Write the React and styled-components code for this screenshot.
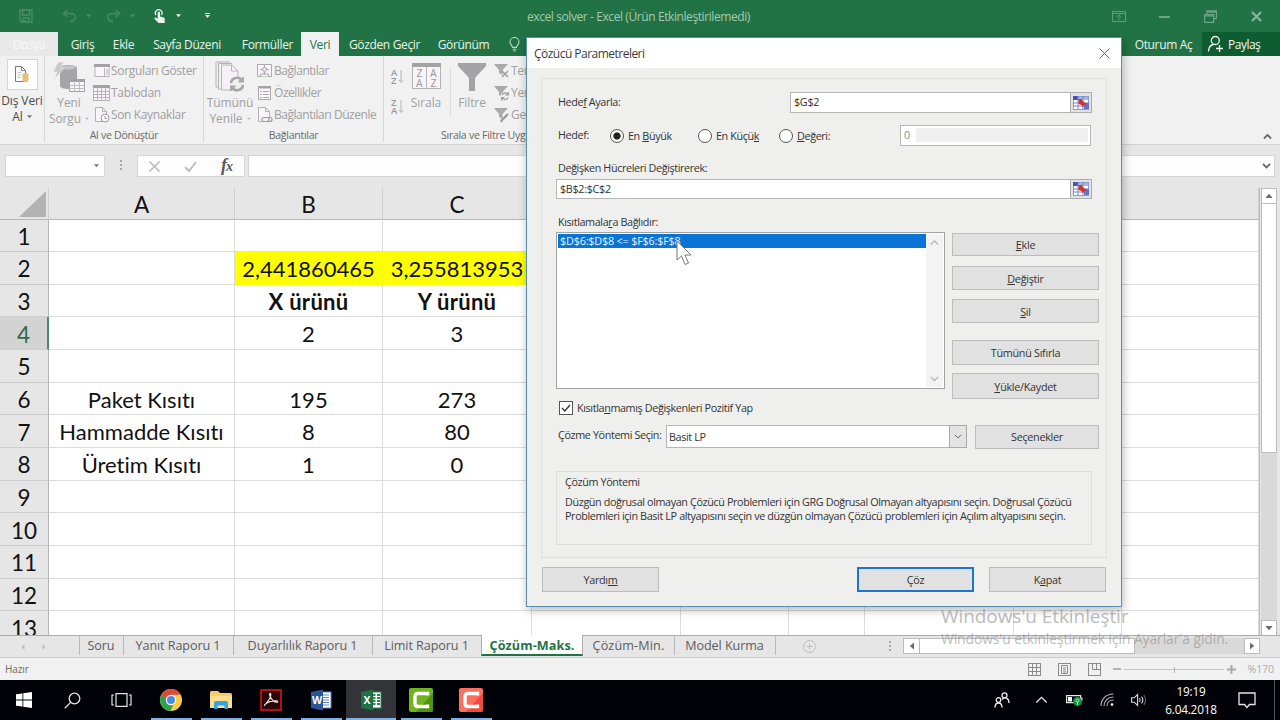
import React from 'react';
import styled, { createGlobalStyle, css } from 'styled-components';

const ui = "'Open Sans', 'Noto Sans', sans-serif";
const cellFont = "Lato, 'Open Sans', sans-serif";
const green = '#217346';

const GlobalStyle = createGlobalStyle`
  * { box-sizing: border-box; }
  body { margin: 0; overflow: hidden; font-family: ${ui}; }
  svg { display: block; flex: none; overflow: visible; }
  u { text-decoration-thickness: 1px; text-underline-offset: 1px; }
`;

const Screen = styled.div`
  position: relative;
  width: 1280px;
  height: 720px;
  overflow: hidden;
  display: flex;
  flex-direction: column;
  background: #e6e6e6;
  white-space: nowrap;
`;

/* title bar */
const TitleBar = styled.div`
  height: 32px;
  flex: none;
  background: ${green};
  display: flex;
  align-items: center;
`;
const QuickAccess = styled.div`
  width: 527px;
  padding-left: 19px;
  display: flex;
  align-items: center;
`;
const Gap = styled.span`
  flex: none;
  width: ${({ $w }) => $w}px;
`;
const WindowTitle = styled.div`
  width: 585px;
  color: #a3cbb2;
  font-size: 12px;
  letter-spacing: -0.41px;
`;

/* ribbon tabs */
const TabRow = styled.div`
  height: 24px;
  flex: none;
  background: ${green};
  display: flex;
`;
const Tab = styled.div`
  width: ${({ $w }) => $w}px;
  height: 24px;
  display: flex;
  align-items: center;
  justify-content: center;
  flex: none;
  font-size: 12px;
  letter-spacing: -0.35px;
  color: #e9f3ec;
  ${({ $file }) => $file && css`
    background: #e9e9e9;
    color: #f9f9f9;
  `}
  ${({ $active }) => $active && css`
    background: #f1f1f1;
    color: ${green};
  `}
`;
const TabSpacer = styled.div`
  flex: 1;
`;
const ShareButton = styled.div`
  width: 78px;
  padding-left: 5px;
  display: flex;
  align-items: center;
  gap: 4px;
  background: #0f5c30;
  color: #f2f8f4;
  font-size: 12px;
  letter-spacing: -0.5px;
`;

/* ribbon */
const Ribbon = styled.div`
  height: 89px;
  flex: none;
  display: flex;
  background: #f1f1f1;
  border-bottom: 1px solid #d2d2d2;
  color: #a09fa1;
  font-size: 12px;
`;
const Group = styled.div`
  width: ${({ $w }) => $w}px;
  height: 86px;
  flex: none;
  display: flex;
  flex-direction: column;
  border-right: 1px solid #d8d8d8;
`;
const GroupBody = styled.div`
  display: flex;
  height: 73px;
`;
const GroupName = styled.div`
  height: 14px;
  line-height: 14px;
  padding-left: ${({ $left = 0 }) => $left}px;
  text-align: ${({ $left }) => ($left ? 'left' : 'center')};
  font-size: 10.6px;
  letter-spacing: -0.3px;
  color: #6a6a6a;
`;
const BigButton = styled.div`
  width: ${({ $w }) => $w}px;
  flex: none;
  display: flex;
  flex-direction: column;
  align-items: center;
  padding-top: ${({ $top = 0 }) => $top}px;
  line-height: 16px;
  letter-spacing: -0.1px;
  color: ${({ $dark }) => ($dark ? '#4a4a4a' : '#a09fa1')};
  div { display: flex; align-items: center; gap: 4px; line-height: 15px; }
`;
const BigIcon = styled.span`
  height: ${({ $h }) => $h}px;
  flex: none;
`;
const IconFrame = styled.span`
  width: 31px;
  height: 31px;
  margin: 3px 0 3px;
  display: flex;
  align-items: center;
  justify-content: center;
  background: #fdfdfd;
  border: 1px solid #d4d4d4;
`;
const SmallList = styled.div`
  display: flex;
  flex-direction: column;
  padding-top: 4px;
`;
const SmallButton = styled.div`
  height: 22px;
  display: flex;
  align-items: center;
  padding-bottom: 1px;
  letter-spacing: ${({ $ls = -0.3 }) => $ls}px;
`;
const SmallIcon = styled.span`
  width: 18px;
  flex: none;
  display: flex;
  justify-content: center;
  padding-right: 1px;
`;
const SortColumn = styled.div`
  width: 26px;
  padding: 12px 0 0 7px;
  display: flex;
  flex-direction: column;
  gap: 12px;
`;
const Divider = styled.span`
  width: 1px;
  height: 49px;
  margin: 12px 3px 0 8px;
  background: #dcdcdc;
`;
const RibbonEnd = styled.div`
  flex: 1;
  display: flex;
  justify-content: flex-end;
  align-items: flex-end;
  padding: 0 8px 5px 0;
`;

/* formula bar */
const FormulaBar = styled.div`
  height: 43px;
  flex: none;
  display: flex;
  padding: 10px 4px 0 5px;
`;
const Field = styled.div`
  width: ${({ $w }) => $w}px;
  height: 22px;
  display: flex;
  align-items: center;
  justify-content: ${({ $between }) => ($between ? 'space-between' : 'flex-end')};
  padding: ${({ $pad = '0 5px' }) => $pad};
  background: #fdfdfd;
  border: 1px solid #d6d6d6;
`;
const Dots = styled.div`
  width: ${({ $w }) => $w}px;
  display: flex;
  justify-content: center;
  padding-top: ${({ $top }) => $top}px;
`;
const Fx = styled.span`
  font: italic bold 18px/18px 'Liberation Serif', serif;
  letter-spacing: -1px;
  color: #5a5a5a;
  small { font-size: 14px; }
`;

/* grid */
const SheetArea = styled.div`
  height: 447px;
  flex: none;
  display: flex;
`;
const Grid = styled.div`
  width: 1260px;
  height: 447px;
  overflow: hidden;
  font-family: ${cellFont};
  font-size: 22px;
  font-variant-ligatures: none;
  color: #111;
  border-right: 1px solid #bdbdbd;
`;
const Row = styled.div`
  display: grid;
  grid-template-columns: 49px 186px 148px 149px 149px 108px 76px 149px 108px 1fr;
  height: ${({ $head }) => ($head ? '31.5px' : '32.66px')};
`;
const HeadCell = styled.div`
  display: flex;
  align-items: center;
  justify-content: center;
  padding-top: 2px;
  background: #e6e6e6;
  border-right: 1px solid #cfcfcf;
  border-bottom: 1px solid #b8b8b8;
  font-size: 22.5px;
`;
const Corner = styled(HeadCell)`
  justify-content: flex-end;
  padding-right: 2px;
`;
const RowNumber = styled(HeadCell)`
  border-right: 1px solid #b4b4b4;
  border-bottom: 1px solid #cdcdcd;
  ${({ $active }) => $active && css`
    background: #d3d3d3;
    color: #2f6a4d;
    border-right: 2px solid #4b8a69;
  `}
`;
const Cell = styled.div`
  display: flex;
  align-items: center;
  justify-content: center;
  padding-top: 1.4px;
  background: #fff;
  border-right: 1px solid #dcdcdc;
  border-bottom: 1px solid #dcdcdc;
  font-weight: ${({ $bold }) => ($bold ? 700 : 400)};
  letter-spacing: ${({ $bold }) => ($bold ? 0.3 : 0)}px;
  ${({ $yellow }) => $yellow && css`
    background: #ffff00;
    border-color: #ffff00;
  `}
`;
const VScroll = styled.div`
  width: 16px;
  height: 448px;
  margin: 0 0 0 1px;
  display: flex;
  flex-direction: column;
  background: #d9d9d9;
`;
const ScrollButton = styled.div`
  width: ${({ $w = 16 }) => $w}px;
  height: 16px;
  flex: none;
  display: flex;
  align-items: center;
  justify-content: center;
  background: #fff;
  border: 1px solid #bcbcbc;
`;
const VThumb = styled.div`
  height: 250px;
  margin-top: -1px;
  background: #fff;
  border: 1px solid #bcbcbc;
`;
const Fill = styled.div`
  flex: 1;
`;

/* sheet tabs */
const SheetBar = styled.div`
  height: 23px;
  flex: none;
  display: flex;
  border-top: 1px solid #ababab;
  border-bottom: 1px solid #cbcbcb;
  color: #5d5d5d;
`;
const SheetNav = styled.div`
  width: 79px;
  display: flex;
  align-items: center;
  padding-left: 20px;
  gap: 15px;
`;
const SheetTab = styled.div`
  width: ${({ $w }) => $w}px;
  height: ${({ $active }) => ($active ? 21 : 19)}px;
  margin-top: ${({ $active }) => ($active ? '-1px' : 0)};
  padding-top: ${({ $active }) => ($active ? '2px' : 0)};
  flex: none;
  display: flex;
  justify-content: center;
  align-items: center;
  font-size: 12.6px;
  letter-spacing: ${({ $ls = -0.08 }) => $ls}px;
  box-shadow: ${({ $active, $first }) => ($active || $first ? 'none' : 'inset 1px 0 #b9b9b9')};
  ${({ $active }) => $active && css`
    background: #fff;
    color: ${green};
    font-weight: 700;
    border: 1px solid #ababab;
    border-top: 0;
    border-bottom: 2px solid ${green};
  `}
`;
const HScroll = styled.div`
  width: 357px;
  height: 16px;
  margin-top: 2px;
  display: flex;
  background: #d9d9d9;
`;
const HThumb = styled.div`
  width: 216px;
  height: 16px;
  margin-left: -1px;
  background: #fff;
  border: 1px solid #bcbcbc;
`;

/* status bar */
const StatusBar = styled.div`
  height: 22px;
  flex: none;
  display: flex;
  align-items: center;
  background: #f1f1f1;
  padding-left: 5px;
  font-size: 10px;
  letter-spacing: -0.1px;
  color: #6a6a6a;
`;
const Zoom = styled.span`
  color: #ababab;
  font-size: 10.6px;
`;
const ZoomLine = styled.span`
  width: 100px;
  height: 1px;
  margin: 0 3px;
  background: #c4c4c4;
  display: flex;
  justify-content: center;
  &::after {
    content: '';
    width: 1px;
    height: 6px;
    margin-top: -2px;
    background: #b4b4b4;
  }
`;

/* taskbar */
const TaskBar = styled.div`
  height: 40px;
  flex: none;
  display: flex;
  background: #010208;
  color: #fff;
`;
const TaskButton = styled.div`
  width: ${({ $w = 50 }) => $w}px;
  height: 40px;
  flex: none;
  display: flex;
  flex-direction: column;
  align-items: center;
  justify-content: space-between;
  background: ${({ $active }) => ($active ? '#333438' : 'transparent')};
`;
const TaskIcon = styled.div`
  height: 38px;
  padding-top: 2px;
  display: flex;
  align-items: center;
`;
const Running = styled.div`
  width: ${({ $full }) => ($full ? 50 : 41)}px;
  height: 2px;
  background: #7fb0e6;
`;
const Tray = styled.div`
  flex: 1;
  display: flex;
  justify-content: flex-end;
  align-items: center;
`;
const Clock = styled.div`
  width: 60px;
  margin: 0 17px 0 14px;
  text-align: center;
  font-size: 11.8px;
  line-height: 18.5px;
  letter-spacing: -0.2px;
`;
const DesktopEdge = styled.div`
  width: 6px;
  height: 40px;
  margin-left: 18px;
  border-left: 1px solid #55565a;
`;

/* solver dialog */
const Dialog = styled.div`
  position: absolute;
  left: 526px;
  top: 37px;
  width: 596px;
  height: 570px;
  background: #efefee;
  border: 1px solid #5790b5;
  box-shadow: 1px 3px 9px rgba(0, 0, 0, 0.28);
  color: #333;
  font-size: 10.8px;
  letter-spacing: -0.38px;
`;
const DialogTitle = styled.div`
  height: 30px;
  background: #fff;
  display: flex;
  justify-content: space-between;
  align-items: center;
  padding: 0 11px 0 7px;
  font-size: 12px;
  letter-spacing: -0.52px;
  color: #3c3c3c;
`;
const Panel = styled.div`
  margin: 10px 15px 0 14px;
  width: 566px;
  height: 480px;
  padding: 13px 0 0 14px;
  border: 1px solid #dfdfdf;
`;
const Line = styled.div`
  display: flex;
  align-items: ${({ $align = 'center' }) => $align};
  height: ${({ $h }) => $h}px;
  margin-bottom: ${({ $mb = 0 }) => $mb}px;
`;
const Label = styled.div`
  width: ${({ $w }) => ($w ? `${$w}px` : 'auto')};
  height: 16px;
  line-height: 16px;
  margin-bottom: ${({ $up = 1 }) => $up * 2}px;
  padding-left: 2px;
  flex: none;
`;
const Input = styled.div`
  width: ${({ $w }) => $w}px;
  height: ${({ $h = 20 }) => $h}px;
  flex: none;
  display: flex;
  align-items: center;
  padding: 0 0 2px 3px;
  letter-spacing: -0.32px;
  background: #fff;
  border: 1px solid #b6b6b6;
`;
const DisabledInput = styled(Input)`
  height: 21px;
  padding: 0 2px 2px 3px;
  color: #8d8d8d;
  &::after {
    content: '';
    flex: 1;
    height: 14px;
    margin-left: 6px;
    background: #f0f0f0;
  }
`;
const RefButton = styled.div`
  width: 22px;
  height: ${({ $h = 21 }) => $h}px;
  margin-left: -1px;
  display: flex;
  align-items: center;
  justify-content: center;
  background: #e2e2e4;
  border: 1px solid #adadad;
`;
const Radio = styled.div`
  width: ${({ $w }) => $w}px;
  height: 16px;
  display: flex;
  align-items: center;
  gap: 4px;
`;
const RadioDot = styled.span`
  width: 14px;
  height: 14px;
  border: 1px solid #555;
  border-radius: 50%;
  background: ${({ $on }) => ($on ? 'radial-gradient(#222 3.2px, #fff 4px)' : '#fff')};
`;
const ConstraintList = styled.div`
  width: 389px;
  height: 157px;
  display: flex;
  justify-content: space-between;
  background: #fff;
  border: 1px solid #a3a3a3;
  padding: 1px;
`;
const Constraint = styled.div`
  width: 369px;
  height: 14px;
  line-height: 13px;
  padding-left: 2px;
  background: #0a74d6;
  color: #e8f3fd;
  letter-spacing: -0.18px;
`;
const ListScroll = styled.div`
  width: 17px;
  display: flex;
  flex-direction: column;
  justify-content: space-between;
  align-items: center;
  padding: 6px 0;
  background: #f3f3f3;
`;
const ButtonColumn = styled.div`
  margin-left: 7px;
  padding-top: 1px;
  display: flex;
  flex-direction: column;
`;
const Button = styled.div`
  width: ${({ $w = 147 }) => $w}px;
  height: ${({ $h = 24 }) => $h}px;
  margin-bottom: ${({ $mb = 0 }) => $mb}px;
  flex: none;
  display: flex;
  align-items: center;
  justify-content: center;
  letter-spacing: -0.28px;
  background: #e1e1e1;
  border: ${({ $primary }) => ($primary ? '2px solid #1f74d0' : '1px solid #bcbcbc')};
`;
const OptionsButton = styled(Button)`
  margin: 1px 0 0 8px;
  padding-bottom: 1px;
`;
const CheckBox = styled.span`
  width: 14px;
  height: 14px;
  margin: 0 4px 0 3px;
  display: flex;
  align-items: center;
  justify-content: center;
  background: #fff;
  border: 1px solid #555;
`;
const Select = styled.div`
  width: 301px;
  height: 23px;
  display: flex;
  align-items: center;
  justify-content: space-between;
  padding-left: 2px;
  background: #fff;
  border: 1px solid #b6b6b6;
`;
const SelectArrow = styled.span`
  width: 18px;
  height: 23px;
  margin-right: -1px;
  display: flex;
  align-items: center;
  justify-content: center;
  background: #e3e3e3;
  border: 1px solid #a9a9a9;
`;
const MethodBox = styled.div`
  width: 536px;
  height: 74px;
  padding: 3px 0 0 8px;
  border: 1px solid #dfdfdf;
  p { margin: 0; line-height: 14px; }
  p:first-child { margin-bottom: 6px; }
`;
const Footer = styled.div`
  display: flex;
  padding: 9px 15px 0 15px;
`;

const Watermark = styled.div`
  position: absolute;
  left: 941px;
  top: 603px;
  color: rgba(140, 140, 140, 0.6);
  font-size: 13.8px;
  line-height: 20px;
  letter-spacing: -0.05px;
  div:first-child {
    font-size: 19px;
    line-height: 26px;
    letter-spacing: -0.08px;
  }
`;
const Pointer = styled.div`
  position: absolute;
  left: 676px;
  top: 240px;
`;

const Caret = ({ color = '#777', s = 5 }) => (
  <svg width={s} height="4" viewBox="0 0 6 4"><path d="M0 0h6L3 3.6z" fill={color} /></svg>
);
const Arrow = ({ turn = 0, color = '#6b6b6b', size = 8 }) => (
  <svg width={size} height={size} viewBox="0 0 8 8">
    <path d="M4 1.8 7.6 6H.4z" fill={color} transform={`rotate(${turn} 4 4)`} />
  </svg>
);
const Chevron = ({ up, color = '#666', w = 10, sw = 1.5 }) => (
  <svg width={w} height={w * 0.6} viewBox="0 0 10 6" fill="none" stroke={color} strokeWidth={sw}>
    <path d={up ? 'M1 5 5 1l4 4' : 'M1 1l4 4 4-4'} />
  </svg>
);
const VDots = () => (
  <svg width="3" height="12" fill="#a8a8a8">
    <rect width="2" height="2" /><rect y="4" width="2" height="2" /><rect y="8" width="2" height="2" />
  </svg>
);
const SaveIcon = () => (
  <svg width="14" height="14" viewBox="0 0 14 14" fill="none" stroke="#4c8f69" strokeWidth="1.3">
    <path d="M1 1h12v12H2.4L1 11.6zM3.5 1v5h7V1M4 13V9h6v4M6 11v2" />
  </svg>
);
const UndoIcon = ({ flip }) => (
  <svg width="15" height="14" viewBox="0 0 15 14" fill="none" stroke="#418760" strokeWidth="1.8">
    <path d="M5.5 1 1.5 4.6l4 3.6M2 4.6h7.2c5.6 0 5.2 7.4-1.2 7.8" transform={flip ? 'translate(15) scale(-1 1)' : undefined} />
  </svg>
);
const TouchIcon = () => (
  <svg width="11" height="15" viewBox="0 0 11 15">
    <path d="M2 6.2A3.4 3.4 0 1 1 7.6 6" fill="none" stroke="#e8f4ec" strokeWidth="1.2" />
    <path d="M3.7 3.8c0-1.500 2.400-1.500 2.400 0v3.700l3.600.9c.8.2 1 .7 1 1.300V14H4.600L.6 10c-.7-1.100.6-1.900 1.500-1.200l1.600 1.200z" fill="#e8f4ec" />
  </svg>
);
const BulbIcon = () => (
  <svg width="11" height="15" viewBox="0 0 11 15" fill="none" stroke="#b9d8c6" strokeWidth="1.1">
    <path d="M3.5 10.4C3.5 8.3 1 7.8 1 5a4.5 4.5 0 0 1 9 0c0 2.800-2.500 3.300-2.500 5.400zM3.700 12.200h3.600M4.300 14h2.400" />
  </svg>
);
const PersonAddIcon = () => (
  <svg width="17" height="18" viewBox="0 0 17 18" fill="none" stroke="#eef6f1" strokeWidth="1.3">
    <circle cx="8.300" cy="5.500" r="4" />
    <path d="M1.500 16.500c.2-4.200 2.200-6.500 5-7M9 13.500h7M12.500 10v7" />
  </svg>
);
const Funnel = ({ w = 28, h = 28 }) => (
  <svg width={w} height={h} viewBox="0 0 28 28" fill="#a3a2a4">
    <path d="M0 0h28v3L17 15v13h-6V15L0 3z" />
  </svg>
);
const SmallFunnel = ({ kind }) => (
  <svg width="16" height="16" viewBox="0 0 16 16">
    <path d="M0 1h14L8.500 7v5L5 10V7z" fill="#aaa9ab" />
    <g fill="none" stroke="#9b9a9c" strokeWidth="1.500">
      {kind === 'clear' && <path d="M8 8l6 6M14 8l-6 6" />}
      {kind === 'again' && (
        <>
          <circle cx="11" cy="11.500" r="4.500" fill="#f1f1f1" stroke="none" />
          <path d="M14 10a3.200 3.200 0 0 0-6 0M8 12.500a3.200 3.200 0 0 0 6 0M14.300 7v3h-3M7.700 15.500v-3h3" strokeWidth="1.200" />
        </>
      )}
      {kind === 'adv' && <path d="M14 7l-6 6-1 2" strokeWidth="2.200" />}
    </g>
  </svg>
);
const SortIcon = ({ a, b }) => (
  <svg width="14" height="18" viewBox="0 0 14 18" fill="#98979a" fontFamily="Open Sans" fontSize="9.500" fontWeight="600">
    <text x="0" y="7.500">{a}</text>
    <text x="0" y="16">{b}</text>
    <path d="M10 2v12M8 12l2 2.500 2-2.500" fill="none" stroke="#b5b4b6" />
  </svg>
);
const SortBigIcon = () => (
  <svg width="29" height="26" viewBox="0 0 29 26" fontFamily="Open Sans" fontSize="10.500">
    <rect x=".5" y=".5" width="28" height="25" fill="#f8f4f8" stroke="#b4b2b5" />
    <path d="M0 0h29v4H0z" fill="#a3a2a4" />
    <path d="M14.500 4v21" stroke="#b4b2b5" />
    <g fill="#98979a">
      <text x="4.500" y="14">Z</text><text x="4" y="23.500">A</text>
      <text x="18" y="14">A</text><text x="18.500" y="23.500">Z</text>
    </g>
  </svg>
);
const DataFileIcon = () => (
  <svg width="16" height="17" viewBox="0 0 16 17">
    <path d="M1.500.5h6l4 4v11h-10z" fill="#fff" stroke="#777" />
    <path d="M7.500.5v4h4" fill="none" stroke="#8a8a8a" />
    <path d="M3.500 6.500h4M3.500 9h4M3.500 11.500h3" fill="none" stroke="#c4c4c4" />
    <path d="M8.500 8.500c0-2 6-2 6 0v6c0 2-6 2-6 0z" fill="#e5c077" />
  </svg>
);
const QueryIcon = () => (
  <svg width="32" height="33" viewBox="0 0 32 33">
    <path d="M7 7c0-4 17-4 17 0v18c0 4-17 4-17 0z" fill="#a5a4a6" />
    <ellipse cx="15.500" cy="6.500" rx="7" ry="2" fill="#c6c5c7" />
    <path d="M5 1h6L7.500 7H11L1 19l3-8H0z" fill="#c9c8ca" stroke="#f1f1f1" strokeWidth=".6" />
    <path d="M16.500 18.500h15v12h-15z" fill="#faf6fa" stroke="#a09fa1" />
    <path d="M16 18h16v3H16z" fill="#a09fa1" />
    <path d="M16 24.500h16M16 27.500h16M21.500 20v10M26.500 20v10" stroke="#c0bdc1" />
  </svg>
);
const RefreshIcon = () => (
  <svg width="30" height="32" viewBox="0 0 30 32">
    <path d="M4 26H1V1h14" fill="none" stroke="#b4b2b5" />
    <path d="M6.500 28H3.500V2.500H17" fill="none" stroke="#b4b2b5" />
    <path d="M6.500 4h10l6.500 6v19H6.500z" fill="#f8f0f8" stroke="#b9b6ba" />
    <path d="M16.500 4v6H23" fill="none" stroke="#b9b6ba" />
    <circle cx="22" cy="23" r="8" fill="#f1f1f1" />
    <g fill="none" stroke="#a5a4a6" strokeWidth="2.600">
      <path d="M16 22a6 6 0 0 1 11-2.500M28 24a6 6 0 0 1-11 2.500" />
      <path d="M28 16v4.500h-4.500M16 30v-4.500h4.500" strokeWidth="1.800" />
    </g>
  </svg>
);
const TableIcon = () => (
  <svg width="17" height="16" viewBox="0 0 17 16" fill="none" stroke="#b7b3b8">
    <rect x=".5" y=".5" width="16" height="15" fill="#faf3fa" />
    <path d="M0 1.500h17" stroke="#a3a2a4" strokeWidth="3" />
    <path d="M0 6.500h17M0 9.500h17M0 12.500h17M4.500 3v13M8.500 3v13M12.500 3v13" />
  </svg>
);
const PaneIcon = () => (
  <svg width="16" height="14" viewBox="0 0 16 14" fill="none" stroke="#b7b3b8">
    <rect x="1" y=".5" width="14" height="12" fill="#faf6fa" />
    <path d="M0 1.500h16" stroke="#a3a2a4" strokeWidth="3" />
    <path d="M10.500 4v9M12 6h2M12 8h2M12 10h2" />
  </svg>
);
const RecentIcon = ({ link }) => (
  <svg width="16" height="16" viewBox="0 0 16 16" fill="none" stroke="#b3b0b4">
    <path d="M1.500.5h7l4 4v10h-11z" fill="#faf3fa" />
    <path d="M8.500.5v4h4" />
    {link
      ? <path d="M7 10.500h3a1.500 1.500 0 0 1 0 4H7a1.500 1.500 0 0 1 0-4zM10 10.500h3a1.500 1.500 0 0 1 0 4h-3" fill="#f1f1f1" stroke="#9c9b9d" strokeWidth="1.200" />
      : <><circle cx="11" cy="11" r="4" fill="#f8f8f8" stroke="#9c9b9d" /><path d="M11 9v2.500h2" stroke="#9c9b9d" /></>}
  </svg>
);
const LinksIcon = () => (
  <svg width="15" height="14" viewBox="0 0 15 14" fill="none" stroke="#aaa8ab">
    <path d="M.5.5h14v12H.5z" fill="#faf3fa" />
    <path d="M3.500 12.500V10h8v2.500" fill="#f1f1f1" />
    <path d="M7.500 1.500 8.400 4.600 11.500 5.500 8.400 6.400 7.500 9.500 6.600 6.400 3.500 5.500 6.600 4.600z" stroke="#949395" strokeWidth=".8" />
  </svg>
);
const PropsIcon = () => (
  <svg width="13" height="14" viewBox="0 0 13 14" fill="none" stroke="#aaa8ab">
    <rect x=".5" y=".5" width="12" height="13" fill="#faf6fa" />
    <path d="M0 1.500h13" stroke="#a3a2a4" strokeWidth="2" />
    <path d="M2 5.500h2M5 5.500h6M2 8.500h2M5 8.500h6M2 11.500h2M5 11.500h6" />
  </svg>
);
const RefIcon = () => (
  <svg width="16" height="14" viewBox="0 0 16 14">
    <rect x=".5" y=".5" width="15" height="13" fill="#fff" stroke="#8b9bd0" />
    <path d="M0 0h5v4H0z" fill="#3f56b4" />
    <path d="M5 1h10v3H5z" fill="#a9b6e4" />
    <path d="M0 7h15M0 10h15M5 0v13M10 0v13" stroke="#7187cf" />
    <path d="M11 7h5v6h-5z" fill="#5f74c4" />
    <path d="M5.500 3H9l.5 2L13 7.500 9.500 11 8.500 9 5.500 8z" fill="#d5342c" />
  </svg>
);
const Letter = ({ fill, dark, l }) => (
  <svg width="22" height="22" viewBox="0 0 22 22">
    <rect x="11" y="3" width="10" height="16" fill="#fff" stroke={fill} />
    {l === 'W'
      ? <path d="M13 6h6M13 8.500h6M13 11h6M13 13.500h6M13 16h6" stroke={fill} />
      : <path d="M13 6h2.500M17 6h3M13 9h2.500M17 9h3M13 12h2.500M17 12h3M13 15h2.500M17 15h3" stroke={fill} strokeWidth="1.800" />}
    <path d="M1 3l12-2.500v21L1 19z" fill={dark} />
    <text x="7" y="15" fill="#fff" fontFamily="Open Sans" fontWeight="700" fontSize="10.500" textAnchor="middle">{l}</text>
  </svg>
);
const Camtasia = ({ a, b }) => (
  <svg width="24" height="24" viewBox="0 0 24 24">
    <rect width="24" height="24" rx="2" fill={a} />
    <path d="M24 5v17a2 2 0 0 1-2 2H7z" fill={b} />
    <path d="M18.500 7.500V5.500H9Q6 5.500 6 8.500v7q0 3 3 3h9.500v-2" fill="none" stroke="#fff" strokeWidth="3.400" />
  </svg>
);
const WindowsIcon = () => (
  <svg width="16" height="16" viewBox="0 0 16 16" fill="#fff">
    <path d="M0 2.300 6.500 1.400v6.200H0zM7.300 1.300 16 0v7.600H7.300zM0 8.400h6.500v6.200L0 13.700zM7.300 8.400H16V16l-8.700-1.300z" />
  </svg>
);
const SearchIcon = () => (
  <svg width="17" height="17" viewBox="0 0 17 17" fill="none" stroke="#e6e6e6" strokeWidth="1.300">
    <circle cx="10.500" cy="6.500" r="5.300" /><path d="M6.600 10.400.8 16.200" />
  </svg>
);
const TaskViewIcon = () => (
  <svg width="21" height="14" viewBox="0 0 21 14" fill="none" stroke="#e6e6e6" strokeWidth="1.200">
    <rect x="5" y=".6" width="11" height="12.800" /><path d="M3 2H1v10h2M18 2h2v10h-2" />
  </svg>
);
const ChromeIcon = () => (
  <svg width="22" height="22" viewBox="0 0 22 22">
    <circle cx="11" cy="11" r="11" fill="#fccd3f" />
    <path d="M1.500 5.500A11 11 0 0 0 10.300 22L14 14.500 11 11z" fill="#2fa353" />
    <path d="M1.500 5.500A11 11 0 0 1 20.600 5.800H11L7 12z" fill="#de4b3c" />
    <circle cx="11" cy="11" r="5.200" fill="#fff" />
    <circle cx="11" cy="11" r="4" fill="#4a8af0" />
  </svg>
);
const ExplorerIcon = () => (
  <svg width="22" height="18" viewBox="0 0 22 18">
    <path d="M0 1.500Q0 0 1.500 0H8l2 2h10.500Q22 2 22 3.500V17H0z" fill="#f3cf6b" />
    <path d="M0 5h22v12H0z" fill="#fbe08d" />
    <path d="M4 18v-6q0-2 2-2h10q2 0 2 2v6h-3.500v-3.500h-7V18z" fill="#36a3e0" />
  </svg>
);
const AcrobatIcon = () => (
  <svg width="22" height="22" viewBox="0 0 22 22">
    <rect x="1" y="1" width="20" height="20" fill="#2b0707" stroke="#d01a1a" strokeWidth="1.600" />
    <path d="M4.500 16.500c2-3.500 6.500-6 6.300-11.200 0-1.600-1.600-.8-1.200.7.800 3.400 4 7.300 7.200 7.500 1.500-.2 1-1.500-.5-1.600-4-.2-8 .8-11 3.200-1 .9-.9 1.500-.8 1.400z" fill="none" stroke="#efe6e6" strokeWidth="1.100" />
  </svg>
);
const PeopleIcon = () => (
  <svg width="16" height="16" viewBox="0 0 16 16" fill="none" stroke="#ececec" strokeWidth="1.300">
    <circle cx="10.500" cy="3.300" r="2.500" /><circle cx="4.500" cy="8" r="2.300" />
    <path d="M1 15.500c0-6 7-6 7 0M8 7.500c2.500-3.500 7-1.500 7 3.500" />
  </svg>
);
const BatteryIcon = () => (
  <svg width="17" height="14" viewBox="0 0 17 14">
    <path d="M.6 2.600h14v7H.6z" fill="none" stroke="#e8e8e8" strokeWidth="1.200" />
    <path d="M2 4h4v4.500H2z" fill="#fff" /><path d="M15 4.500h1.500v3H15z" fill="#e8e8e8" />
    <circle cx="11.500" cy="8.500" r="4.500" fill="#169243" />
    <path d="M10 7.500c0-2 3-2 3 0s-3 2-3 0M11.500 9v3" stroke="#bfe8cc" fill="none" />
  </svg>
);
const WifiIcon = () => (
  <svg width="15" height="14" viewBox="0 0 15 14" fill="none" stroke="#b9bbbd" strokeWidth="1.100">
    <path d="M1 13C1 6 6 1 13.500 1M4 13c0-5 4-9 9.500-9M7 13c0-3.500 2.500-6 6.500-6" />
    <circle cx="12" cy="11.500" r="1.300" fill="#fff" stroke="none" />
  </svg>
);
const VolumeIcon = () => (
  <svg width="16" height="14" viewBox="0 0 16 14" fill="none" stroke="#dcdcdc" strokeWidth="1.100">
    <path d="M.6 4.800h2.600L6.600 1.500v11L3.200 9.200H.6z" />
    <path d="M8.500 5q1.400 2 0 4M10.500 3.500q2.600 3.500 0 7" /><path d="M12.800 2q3.600 5 0 10" stroke="#66686c" />
  </svg>
);
const NoteIcon = () => (
  <svg width="18" height="17" viewBox="0 0 18 17" fill="none" stroke="#e8e8e8" strokeWidth="1.300">
    <path d="M1 1h16v11.500h-5.500L9 15.500l-2.500-3H1z" />
  </svg>
);
const RestoreIcon = () => (
  <svg width="13" height="13" viewBox="0 0 13 13" fill="none" stroke="#6ba585" strokeWidth="1.200">
    <path d="M.6 4.600h9v7.800h-9zM.6 6h9M3 4V.8h9.400v7.800H10M3 2.200h9.400" />
  </svg>
);
const RibbonModeIcon = () => (
  <svg width="14" height="11" viewBox="0 0 14 11" fill="none" stroke="#5f9d7b">
    <path d="M.5.5h13v10H.5zM.5 2.500h13M7 9V4M4.800 6 7 4l2.200 2" />
  </svg>
);
const ViewIcon = ({ kind }) => (
  <svg width="13" height="13" viewBox="0 0 13 13" fill="none" stroke="#8b8b8b">
    <rect x=".5" y=".5" width="12" height="12" />
    {kind === 'grid' && <path d="M.5 4.500h12M.5 8.500h12M4.500.5v12M8.500.5v12" />}
    {kind === 'page' && <path d="M3.500 2.500h6v8h-6zM5 5h3M5 7h3M5 9h3" />}
    {kind === 'break' && <path d="M4.500.5v6h8M8.500.5v6" />}
  </svg>
);

const SHEET_ROWS = [
  [],
  ['', '2,441860465', '3,255813953'],
  ['', 'X ürünü', 'Y ürünü'],
  ['', '2', '3'],
  [],
  ['Paket Kısıtı', '195', '273'],
  ['Hammadde Kısıtı', '8', '80'],
  ['Üretim Kısıtı', '1', '0'],
  [], [], [], [], [],
];
const COLUMNS = ['A', 'B', 'C', 'D', 'E', 'F', 'G', 'H', ''];

const SheetGrid = () => (
  <Grid>
    <Row $head>
      <Corner><svg width="27" height="26"><path d="M27 0v26H0z" fill="#b3b3b3" /></svg></Corner>
      {COLUMNS.map((c) => <HeadCell key={c}>{c}</HeadCell>)}
    </Row>
    {SHEET_ROWS.map((row, i) => (
      <Row key={i}>
        <RowNumber $active={i === 3}>{i + 1}</RowNumber>
        {COLUMNS.map((c, j) => (
          <Cell key={c} $bold={i === 2} $yellow={i === 1 && j > 0 && j < 3}>{row[j]}</Cell>
        ))}
      </Row>
    ))}
  </Grid>
);

const SolverDialog = () => (
  <Dialog>
    <DialogTitle>
      Çözücü Parametreleri
      <svg width="11" height="11" stroke="#666" fill="none"><path d="M.5.5l10 10M10.500.5l-10 10" /></svg>
    </DialogTitle>
    <Panel>
      <Line $h={21} $mb={12}>
        <Label $w={234}>Hede<u>f</u> Ayarla:</Label>
        <Input $w={281} $h={21}>$G$2</Input>
        <RefButton><RefIcon /></RefButton>
      </Line>
      <Line $h={21} $mb={14}>
        <Label $w={54}>Hedef:</Label>
        <Radio $w={88}><RadioDot $on /><span>En <u>B</u>üyük</span></Radio>
        <Radio $w={81}><RadioDot /><span>En Küçü<u>k</u></span></Radio>
        <Radio $w={121}><RadioDot /><span><u>D</u>eğeri:</span></Radio>
        <DisabledInput $w={191}>0</DisabledInput>
      </Line>
      <Line $h={18} $mb={1}><Label>Değişken Hücreleri Değiştirerek:</Label></Line>
      <Line $h={20} $mb={14}>
        <Input $w={515}>$B$2:$C$2</Input>
        <RefButton $h={20}><RefIcon /></RefButton>
      </Line>
      <Line $h={18} $mb={1}><Label $up={0.5}>Kısıtlamala<u>r</u>a Bağlıdır:</Label></Line>
      <Line $h={168} $align="flex-start">
        <ConstraintList>
          <Constraint>$D$6:$D$8 &lt;= $F$6:$F$8</Constraint>
          <ListScroll>
            <Chevron up color="#b5b5b5" w={9} />
            <Chevron color="#b5b5b5" w={9} />
          </ListScroll>
        </ConstraintList>
        <ButtonColumn>
          <Button $mb={10} $h={23}><span><u>E</u>kle</span></Button>
          <Button $mb={9}><span><u>D</u>eğiştir</span></Button>
          <Button $mb={17}><span><u>S</u>il</span></Button>
          <Button $mb={8} $h={25}>Tümünü Sıfırla</Button>
          <Button $h={26}><span><u>Y</u>ükle/Kaydet</span></Button>
        </ButtonColumn>
      </Line>
      <Line $h={15} $mb={10}>
        <CheckBox>
          <svg width="10" height="8" fill="none" stroke="#333" strokeWidth="1.300"><path d="M1 4l2.800 3L9 1" /></svg>
        </CheckBox>
        <span>Kısıtla<u>n</u>mamış Değişkenleri Pozitif Yap</span>
      </Line>
      <Line $h={23} $mb={23}>
        <Label $w={110} $up={1.5}>Çözme Yöntemi Seçin:</Label>
        <Select>Basit LP<SelectArrow><Chevron color="#666" w={8} sw={1.200} /></SelectArrow></Select>
        <OptionsButton $w={124}>Seçenekler</OptionsButton>
      </Line>
      <MethodBox>
        <p>Çözüm Yöntemi</p>
        <p>Düzgün doğrusal olmayan Çözücü Problemleri için GRG Doğrusal Olmayan altyapısını seçin. Doğrusal Çözücü</p>
        <p>Problemleri için Basit LP altyapısını seçin ve düzgün olmayan Çözücü problemleri için Açılım altyapısını seçin.</p>
      </MethodBox>
    </Panel>
    <Footer>
      <Button $w={117} $h={25}><span>Yardı<u>m</u></span></Button>
      <Gap $w={198} />
      <Button $w={117} $h={25} $primary>Çöz</Button>
      <Gap $w={15} />
      <Button $w={117} $h={25}><span>K<u>a</u>pat</span></Button>
    </Footer>
  </Dialog>
);

const App = () => (
  <Screen>
    <GlobalStyle />
    <TitleBar>
      <QuickAccess>
        <SaveIcon />
        <Gap $w={29} /><UndoIcon /><Gap $w={9} /><Caret color="#4c8f69" />
        <Gap $w={15} /><UndoIcon flip /><Gap $w={9} /><Caret color="#4c8f69" />
        <Gap $w={19} /><TouchIcon /><Gap $w={11} /><Caret color="#e8f4ec" />
        <Gap $w={24} />
        <svg width="5" height="6" fill="#e8f4ec"><path d="M0 0h5v1H0zM0 2h5L2.500 5z" /></svg>
      </QuickAccess>
      <WindowTitle>excel solver - Excel (Ürün Etkinleştirilemedi)</WindowTitle>
      <RibbonModeIcon />
      <Gap $w={33} />
      <svg width="11" height="4" fill="#6ba585"><path d="M0 2h11v2H0z" /></svg>
      <Gap $w={34} /><RestoreIcon /><Gap $w={34} />
      <svg width="11" height="11" stroke="#8ab79d" strokeWidth="2.200"><path d="M1 1l9 9M10 1l-9 9" /></svg>
    </TitleBar>
    <TabRow>
      <Tab $w={58} $file>Dosya</Tab>
      <Tab $w={49}>Giriş</Tab>
      <Tab $w={33}>Ekle</Tab>
      <Tab $w={94}>Sayfa Düzeni</Tab>
      <Tab $w={67}>Formüller</Tab>
      <Tab $w={38} $active>Veri</Tab>
      <Tab $w={91}>Gözden Geçir</Tab>
      <Tab $w={67}>Görünüm</Tab>
      <Tab $w={35}><BulbIcon /></Tab>
      <TabSpacer />
      <Tab $w={77}>Oturum Aç</Tab>
      <ShareButton><PersonAddIcon />Paylaş</ShareButton>
    </TabRow>
    <Ribbon>
      <Group $w={45}>
        <BigButton $w={44} $dark>
          <IconFrame><DataFileIcon /></IconFrame>
          Dış Veri
          <div>Al <Caret /></div>
        </BigButton>
      </Group>
      <Group $w={159}>
        <GroupBody>
          <BigButton $w={48} $top={5}>
            <BigIcon $h={34}><QueryIcon /></BigIcon>
            Yeni
            <div>Sorgu <Caret color="#bbb" s={4} /></div>
          </BigButton>
          <SmallList>
            <SmallButton $ls={-0.33}><SmallIcon><PaneIcon /></SmallIcon>Sorguları Göster</SmallButton>
            <SmallButton><SmallIcon><TableIcon /></SmallIcon>Tablodan</SmallButton>
            <SmallButton $ls={-0.37}><SmallIcon><RecentIcon /></SmallIcon>Son Kaynaklar</SmallButton>
          </SmallList>
        </GroupBody>
        <GroupName>Al ve Dönüştür</GroupName>
      </Group>
      <Group $w={180}>
        <GroupBody>
          <BigButton $w={52} $top={5}>
            <BigIcon $h={34}><RefreshIcon /></BigIcon>
            Tümünü
            <div>Yenile <Caret color="#bbb" s={4} /></div>
          </BigButton>
          <SmallList>
            <SmallButton $ls={-0.45}><SmallIcon><LinksIcon /></SmallIcon>Bağlantılar</SmallButton>
            <SmallButton $ls={-0.45}><SmallIcon><PropsIcon /></SmallIcon>Özellikler</SmallButton>
            <SmallButton $ls={-0.47}><SmallIcon><RecentIcon link /></SmallIcon>Bağlantıları Düzenle</SmallButton>
          </SmallList>
        </GroupBody>
        <GroupName>Bağlantılar</GroupName>
      </Group>
      <Group $w={300}>
        <GroupBody>
          <SortColumn><SortIcon a="A" b="Z" /><SortIcon a="Z" b="A" /></SortColumn>
          <BigButton $w={32} $top={7}>
            <BigIcon $h={32}><SortBigIcon /></BigIcon>Sırala
          </BigButton>
          <Divider />
          <BigButton $w={36} $top={7}>
            <BigIcon $h={32}><Funnel /></BigIcon>Filtre
          </BigButton>
          <Gap $w={3} />
          <SmallList>
            <SmallButton><SmallIcon><SmallFunnel kind="clear" /></SmallIcon>Temizle</SmallButton>
            <SmallButton><SmallIcon><SmallFunnel kind="again" /></SmallIcon>Yeniden Uygula</SmallButton>
            <SmallButton><SmallIcon><SmallFunnel kind="adv" /></SmallIcon>Gelişmiş</SmallButton>
          </SmallList>
        </GroupBody>
        <GroupName $left={57}>Sırala ve Filtre Uygula</GroupName>
      </Group>
      <RibbonEnd><Chevron up w={9} sw={2} /></RibbonEnd>
    </Ribbon>
    <FormulaBar>
      <Field $w={100}><Caret /></Field>
      <Dots $w={32} $top={5}><VDots /></Dots>
      <Field $w={108} $between $pad="0 12px 0 11px">
        <svg width="11" height="11" stroke="#b8b8b8" strokeWidth="1.500"><path d="M.5.5l10 10M10.500.5l-10 10" /></svg>
        <svg width="13" height="11" fill="none" stroke="#bdbdbd" strokeWidth="2"><path d="M1 6l4 4 7-9" /></svg>
        <Fx>f<small>x</small></Fx>
      </Field>
      <Gap $w={3} />
      <Field $w={1027} $pad="0 3px"><Chevron w={9} sw={2} /></Field>
    </FormulaBar>
    <SheetArea>
      <SheetGrid />
      <VScroll>
        <ScrollButton><Arrow /></ScrollButton>
        <VThumb />
        <Fill />
        <ScrollButton><Arrow turn={180} /></ScrollButton>
      </VScroll>
    </SheetArea>
    <SheetBar>
      <SheetNav><Arrow turn={-90} size={6} color="#bdbdbd" /><Arrow turn={90} size={6} color="#bdbdbd" /></SheetNav>
      <SheetTab $w={44}>Soru</SheetTab>
      <SheetTab $w={110}>Yanıt Raporu 1</SheetTab>
      <SheetTab $w={139}>Duyarlılık Raporu 1</SheetTab>
      <SheetTab $w={109}>Limit Raporu 1</SheetTab>
      <SheetTab $w={102} $active $ls={0.1}>Çözüm-Maks.</SheetTab>
      <SheetTab $w={91} $ls={0.15} $first>Çözüm-Min.</SheetTab>
      <SheetTab $w={101}>Model Kurma</SheetTab>
      <SheetTab $w={68}>
        <svg width="13" height="13" fill="none" stroke="#bdbdbd"><circle cx="6.500" cy="7.500" r="6" /><path d="M6.500 4.500v6M3.500 7.500h6" /></svg>
      </SheetTab>
      <Gap $w={35} />
      <Dots $w={25} $top={5}><VDots /></Dots>
      <HScroll>
        <ScrollButton $w={17}><Arrow turn={-90} /></ScrollButton>
        <HThumb />
        <Fill />
        <ScrollButton><Arrow turn={90} /></ScrollButton>
      </HScroll>
    </SheetBar>
    <StatusBar>
      Hazır
      <Fill />
      <ViewIcon kind="grid" /><Gap $w={17} />
      <ViewIcon kind="page" /><Gap $w={17} />
      <ViewIcon kind="break" /><Gap $w={12} />
      <svg width="8" height="2"><path d="M0 0h8v2H0z" fill="#b4b4b4" /></svg>
      <ZoomLine />
      <svg width="9" height="9" stroke="#a8a8a8" strokeWidth="2"><path d="M4.500 0v9M0 4.500h9" /></svg>
      <Gap $w={11} />
      <Zoom>%170</Zoom>
      <Gap $w={6} />
    </StatusBar>
    <TaskBar>
      <TaskButton $w={48}><TaskIcon><WindowsIcon /></TaskIcon></TaskButton>
      <TaskButton $w={48}><TaskIcon><SearchIcon /></TaskIcon></TaskButton>
      <TaskButton $w={50}><TaskIcon><TaskViewIcon /></TaskIcon></TaskButton>
      <TaskButton><TaskIcon><ChromeIcon /></TaskIcon><Running /></TaskButton>
      <TaskButton><TaskIcon><ExplorerIcon /></TaskIcon><Running /></TaskButton>
      <TaskButton><TaskIcon><AcrobatIcon /></TaskIcon><Running /></TaskButton>
      <TaskButton><TaskIcon><Letter l="W" fill="#5b86c5" dark="#2a5699" /></TaskIcon><Running /></TaskButton>
      <TaskButton $active><TaskIcon><Letter l="X" fill="#2c8a57" dark="#1e7145" /></TaskIcon><Running $full /></TaskButton>
      <TaskButton><TaskIcon><Camtasia a="#6db51b" b="#4f930f" /></TaskIcon><Running /></TaskButton>
      <TaskButton><TaskIcon><Camtasia a="#fb6f5f" b="#f24a3e" /></TaskIcon><Running /></TaskButton>
      <Tray>
        <PeopleIcon /><Gap $w={25} />
        <Chevron up color="#e6e6e6" w={13} sw={1} /><Gap $w={18} />
        <BatteryIcon /><Gap $w={17} />
        <WifiIcon /><Gap $w={16} />
        <VolumeIcon />
        <Clock>19:19<br />6.04.2018</Clock>
        <NoteIcon />
        <DesktopEdge />
      </Tray>
    </TaskBar>
    <SolverDialog />
    <Watermark>
      <div>Windows&apos;u Etkinleştir</div>
      <div>Windows&apos;u etkinleştirmek için Ayarlar&apos;a gidin.</div>
    </Watermark>
    <Pointer>
      <svg width="16" height="26" viewBox="0 0 16 26">
        <path d="M1 1v19l4.500-4L9 24.500l3.500-1.500L9 15h6z" fill="#fff" stroke="#777" />
      </svg>
    </Pointer>
  </Screen>
);

export default App;
